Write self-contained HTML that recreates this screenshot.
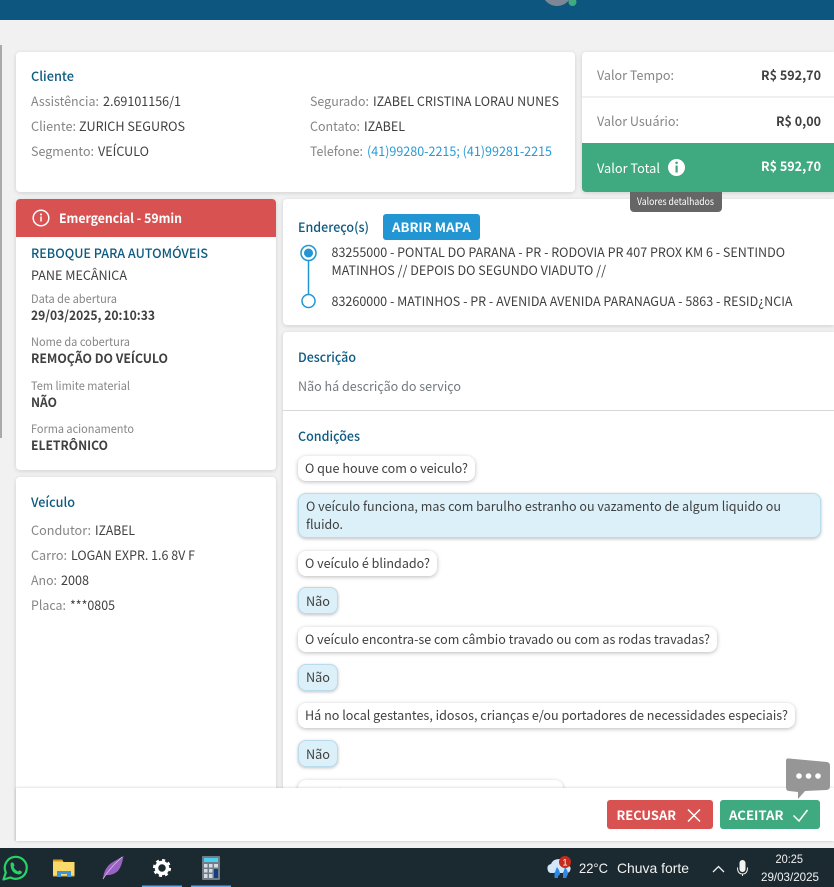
<!DOCTYPE html>
<html lang="pt-BR"><head><meta charset="utf-8"><title>Serviço</title>
<style>
html,body{margin:0;padding:0;width:834px;height:887px;overflow:hidden;background:#f1f1f1}
body{position:relative;font-family:"Liberation Sans","Noto Sans CJK JP",sans-serif}
.b{position:absolute;background:#fff;border-radius:4px;box-shadow:0 1px 4px rgba(0,0,0,.14)}
.q{position:absolute;background:#fff;border-radius:8px;box-shadow:0 1px 4px rgba(0,0,0,.28);left:298px}
.a{position:absolute;background:#dcf0f9;border:1px solid #b9dcec;box-sizing:border-box;border-radius:8px;box-shadow:0 1px 3px rgba(0,0,0,.25);left:298px}
svg{position:absolute;left:0;top:0}
text{font-family:"Noto Sans CJK JP","Liberation Sans",sans-serif;font-size:13px;fill:#404040}
.g{fill:#858585}.d{fill:#404040}.h{fill:#0d5a82;font-weight:500}.l{fill:#2b9ad6}.m{fill:#858585;font-size:11.5px}
.s{font-weight:700;fill:#404040}.w{fill:#fff}.wb{fill:#fff;font-weight:700}.n{fill:#727a80}
.tb{font-family:"Liberation Sans",sans-serif;fill:#f2f2f2;font-size:14px}
</style></head><body>
<div style="position:absolute;left:0;top:0;width:834px;height:20px;background:#0d5680"></div>
<div style="position:absolute;left:0;top:45px;width:2px;height:393px;background:#aaa"></div>

<div class="b" style="left:16px;top:52px;width:559px;height:140px"></div>
<div class="b" style="left:582px;top:52px;width:252px;height:140px;border-radius:4px 0 0 4px"></div>
<div style="position:absolute;left:582px;top:96px;width:252px;height:2px;background:#efefef"></div>
<div style="position:absolute;left:582px;top:143px;width:252px;height:49px;background:#3fa97f;border-radius:0 0 0 4px"></div>

<div class="b" style="left:16px;top:199px;width:260px;height:271px"></div>
<div style="position:absolute;left:16px;top:199px;width:260px;height:38px;background:#d95252;border-radius:4px 4px 0 0"></div>
<div class="b" style="left:16px;top:477px;width:260px;height:390px"></div>

<div class="b" style="left:283px;top:199px;width:551px;height:126px;border-radius:4px 0 0 4px"></div>
<div class="b" style="left:283px;top:332px;width:551px;height:520px;border-radius:4px 0 0 4px"></div>
<div style="position:absolute;left:283px;top:410px;width:551px;height:1px;background:#d8d8d8"></div>
<div style="position:absolute;left:383px;top:214px;width:97px;height:26px;background:#2196d3;border-radius:3px"></div>
<div style="position:absolute;left:630px;top:192px;width:92px;height:20px;background:#666;border-radius:0 0 4px 4px"></div>

<div class="q" style="top:456px;width:177px;height:25px"></div>
<div class="a" style="top:493px;width:523px;height:45px"></div>
<div class="q" style="top:551px;width:139px;height:25px"></div>
<div class="a" style="top:587px;width:40px;height:27px"></div>
<div class="q" style="top:627px;width:419px;height:25px"></div>
<div class="a" style="top:664px;width:40px;height:27px"></div>
<div class="q" style="top:703px;width:497px;height:25px"></div>
<div class="a" style="top:740px;width:40px;height:27px"></div>
<div class="q" style="top:780px;width:265px;height:25px"></div>

<svg width="834" height="887" viewBox="0 0 834 887" style="z-index:1">
<circle cx="557" cy="-9" r="15" fill="#7d8796"/><circle cx="572.500" cy="2" r="4" fill="#3fa97f"/>

<text class="h" x="31" y="81" textLength="43" lengthAdjust="spacingAndGlyphs">Cliente</text>
<text class="g" x="31" y="106" textLength="68" lengthAdjust="spacingAndGlyphs">Assistência:</text>
<text class="d" x="103" y="106" textLength="78" lengthAdjust="spacingAndGlyphs">2.69101156/1</text>
<text class="g" x="31" y="131" textLength="45" lengthAdjust="spacingAndGlyphs">Cliente:</text>
<text class="d" x="79" y="131" textLength="106" lengthAdjust="spacingAndGlyphs">ZURICH SEGUROS</text>
<text class="g" x="31" y="156" textLength="63" lengthAdjust="spacingAndGlyphs">Segmento:</text>
<text class="d" x="98" y="156" textLength="51" lengthAdjust="spacingAndGlyphs">VEÍCULO</text>
<text class="g" x="310" y="106" textLength="59" lengthAdjust="spacingAndGlyphs">Segurado:</text>
<text class="d" x="373" y="106" textLength="186" lengthAdjust="spacingAndGlyphs">IZABEL CRISTINA LORAU NUNES</text>
<text class="g" x="310" y="131" textLength="50" lengthAdjust="spacingAndGlyphs">Contato:</text>
<text class="d" x="364" y="131" textLength="41" lengthAdjust="spacingAndGlyphs">IZABEL</text>
<text class="g" x="310" y="156" textLength="53" lengthAdjust="spacingAndGlyphs">Telefone:</text>
<text class="l" x="367" y="156" textLength="185" lengthAdjust="spacingAndGlyphs">(41)99280-2215; (41)99281-2215</text>

<text class="g" x="597" y="80" textLength="77" lengthAdjust="spacingAndGlyphs">Valor Tempo:</text>
<text class="s" x="761" y="80" textLength="60" lengthAdjust="spacingAndGlyphs">R$ 592,70</text>
<text class="g" x="597" y="126" textLength="82" lengthAdjust="spacingAndGlyphs">Valor Usuário:</text>
<text class="s" x="776" y="126" textLength="45" lengthAdjust="spacingAndGlyphs">R$ 0,00</text>
<text class="w" x="597" y="173" textLength="63" lengthAdjust="spacingAndGlyphs">Valor Total</text>
<circle cx="676.500" cy="167.500" r="8.500" fill="#fff"/>
<rect x="675.500" y="165.500" width="2.200" height="7" fill="#3fa97f"/><circle cx="676.600" cy="162.800" r="1.300" fill="#3fa97f"/>
<text class="wb" x="761" y="171" textLength="60" lengthAdjust="spacingAndGlyphs">R$ 592,70</text>
<text class="w" x="637" y="205" style="font-size:10px" textLength="77" lengthAdjust="spacingAndGlyphs">Valores detalhados</text>

<circle cx="41" cy="218" r="7.800" fill="none" stroke="#fff" stroke-width="1.500"/>
<rect x="40.300" y="216.500" width="1.500" height="5" fill="#fff"/><circle cx="41" cy="214.500" r="1" fill="#fff"/>
<text class="wb" x="59" y="223" textLength="123" lengthAdjust="spacingAndGlyphs">Emergencial - 59min</text>
<text class="h" x="31" y="258" textLength="177" lengthAdjust="spacingAndGlyphs">REBOQUE PARA AUTOMÓVEIS</text>
<text class="d" x="31" y="280" textLength="96" lengthAdjust="spacingAndGlyphs">PANE MECÂNICA</text>
<text class="m" x="31" y="303" textLength="86" lengthAdjust="spacingAndGlyphs">Data de abertura</text>
<text class="s" x="31" y="320" textLength="124" lengthAdjust="spacingAndGlyphs">29/03/2025, 20:10:33</text>
<text class="m" x="31" y="346" textLength="99" lengthAdjust="spacingAndGlyphs">Nome da cobertura</text>
<text class="s" x="31" y="363" textLength="137" lengthAdjust="spacingAndGlyphs">REMOÇÃO DO VEÍCULO</text>
<text class="m" x="31" y="390" textLength="99" lengthAdjust="spacingAndGlyphs">Tem limite material</text>
<text class="s" x="31" y="407" textLength="26" lengthAdjust="spacingAndGlyphs">NÃO</text>
<text class="m" x="31" y="433" textLength="103" lengthAdjust="spacingAndGlyphs">Forma acionamento</text>
<text class="s" x="31" y="450" textLength="77" lengthAdjust="spacingAndGlyphs">ELETRÔNICO</text>

<text class="h" x="31" y="507" textLength="44" lengthAdjust="spacingAndGlyphs">Veículo</text>
<text class="g" x="31" y="535" textLength="60" lengthAdjust="spacingAndGlyphs">Condutor:</text>
<text class="d" x="95" y="535" textLength="40" lengthAdjust="spacingAndGlyphs">IZABEL</text>
<text class="g" x="31" y="560" textLength="36" lengthAdjust="spacingAndGlyphs">Carro:</text>
<text class="d" x="71" y="560" textLength="124" lengthAdjust="spacingAndGlyphs">LOGAN EXPR. 1.6 8V F</text>
<text class="g" x="31" y="585" textLength="26" lengthAdjust="spacingAndGlyphs">Ano:</text>
<text class="d" x="61" y="585" textLength="28" lengthAdjust="spacingAndGlyphs">2008</text>
<text class="g" x="31" y="610" textLength="35" lengthAdjust="spacingAndGlyphs">Placa:</text>
<text class="d" x="70" y="610" textLength="45" lengthAdjust="spacingAndGlyphs">***0805</text>

<text class="h" x="298" y="232" textLength="71" lengthAdjust="spacingAndGlyphs">Endereço(s)</text>
<text class="wb" x="392" y="232" textLength="79" lengthAdjust="spacingAndGlyphs">ABRIR MAPA</text>
<line x1="308.500" y1="253" x2="308.500" y2="296" stroke="#2196d3" stroke-width="1.500"/>
<circle cx="308.500" cy="253" r="7.500" fill="#fff" stroke="#2196d3" stroke-width="1.500"/>
<circle cx="308.500" cy="253" r="4.500" fill="#2196d3"/>
<circle cx="308.500" cy="301" r="6.500" fill="#fff" stroke="#2196d3" stroke-width="1.500"/>
<text class="d" x="331.500" y="257" textLength="453.500" lengthAdjust="spacingAndGlyphs">83255000 - PONTAL DO PARANA - PR - RODOVIA PR 407 PROX KM 6 - SENTINDO</text>
<text class="d" x="331.500" y="275" textLength="274.500" lengthAdjust="spacingAndGlyphs">MATINHOS // DEPOIS DO SEGUNDO VIADUTO //</text>
<text class="d" x="331.500" y="306" textLength="461" lengthAdjust="spacingAndGlyphs">83260000 - MATINHOS - PR - AVENIDA AVENIDA PARANAGUA - 5863 - RESID¿NCIA</text>

<text class="h" x="298" y="362" textLength="58" lengthAdjust="spacingAndGlyphs">Descrição</text>
<text class="n" x="298" y="391" textLength="163" lengthAdjust="spacingAndGlyphs">Não há descrição do serviço</text>
<text class="h" x="298" y="441" textLength="62" lengthAdjust="spacingAndGlyphs">Condições</text>

<text class="d" x="305" y="473" textLength="163" lengthAdjust="spacingAndGlyphs">O que houve com o veiculo?</text>
<text class="d" x="306" y="511" textLength="475" lengthAdjust="spacingAndGlyphs">O veículo funciona, mas com barulho estranho ou vazamento de algum liquido ou</text>
<text class="d" x="306" y="529" textLength="37" lengthAdjust="spacingAndGlyphs">fluido.</text>
<text class="d" x="305" y="568" textLength="125" lengthAdjust="spacingAndGlyphs">O veículo é blindado?</text>
<text class="d" x="306" y="606" textLength="24" lengthAdjust="spacingAndGlyphs">Não</text>
<text class="d" x="305" y="644" textLength="405" lengthAdjust="spacingAndGlyphs">O veículo encontra-se com câmbio travado ou com as rodas travadas?</text>
<text class="d" x="306" y="682" textLength="24" lengthAdjust="spacingAndGlyphs">Não</text>
<text class="d" x="305" y="720" textLength="483" lengthAdjust="spacingAndGlyphs">Há no local gestantes, idosos, crianças e/ou portadores de necessidades especiais?</text>
<text class="d" x="306" y="759" textLength="24" lengthAdjust="spacingAndGlyphs">Não</text>
<text class="d" x="305" y="799" textLength="251" lengthAdjust="spacingAndGlyphs">O veículo possui rodas de liga leve?</text>
</svg>

<div style="position:absolute;z-index:2;left:0;top:841px;width:834px;height:7px;background:#f1f1f1"></div>
<div style="position:absolute;z-index:2;left:16px;top:788px;width:818px;height:53px;background:#fff;box-shadow:0 0 3px rgba(0,0,0,.2)"></div>
<div style="position:absolute;z-index:2;left:607px;top:800px;width:106px;height:29px;background:#d95252;border-radius:3px"></div>
<div style="position:absolute;z-index:2;left:720px;top:800px;width:100px;height:29px;background:#3fa97f;border-radius:3px"></div>
<div style="position:absolute;z-index:2;left:0;top:848px;width:834px;height:39px;background:#1b2a30"></div>

<svg width="834" height="887" viewBox="0 0 834 887" style="z-index:3">
<text class="wb" x="616.500" y="820" textLength="59.500" lengthAdjust="spacingAndGlyphs">RECUSAR</text>
<path d="M688 809.500L700 821.500M700 809.500L688 821.500" stroke="#fff" stroke-width="1.500" fill="none"/>
<text class="wb" x="729" y="820" textLength="54.500" lengthAdjust="spacingAndGlyphs">ACEITAR</text>
<path d="M793.500 815.500L799 821L807.500 810" stroke="#fff" stroke-width="1.500" fill="none"/>

<path d="M789 758.500L827 762Q830 762.500 830 766L830 786Q830 790 826 790L805 791L798 799L798 792L789 791Q786 791 786 787L786 761Q786 758 789 758.500Z" fill="#969696"/>
<circle cx="799" cy="776" r="2.800" fill="#fff"/><circle cx="808.500" cy="776" r="2.800" fill="#fff"/><circle cx="818" cy="776" r="2.800" fill="#fff"/>

<path d="M3.500 879.500L5.800 872.500A11 11 0 1 1 10.500 877.500Z" fill="none" stroke="#25d366" stroke-width="2.200" stroke-linejoin="round"/>
<path d="M10.500 863.500Q12 861.500 13.500 863L14.500 865.500L13.500 867Q15 870 18 871.500L19.500 870.300L22 871.800Q22 874 19 874.500Q10.500 873.500 10.500 863.500Z" fill="#25d366"/>

<path d="M53 859.500H62L63.500 862H74.500V876.500H53Z" fill="#fbd96b"/>
<path d="M53 859.500H62L63 861.500H53Z" fill="#d99a16"/>
<path d="M53 875.500H74.500V876.500H53Z" fill="#d9a53a"/>
<path d="M57 877V871H71V877H67V874H61V877Z" fill="#3a94dc"/>

<path d="M103 879Q104 867 113 862Q118 859 123.500 856Q122 866 118 871Q112 876 105.500 875Q104 877 103 879Z" fill="#9a62c2"/>
<path d="M103 879Q109 869 122 857" stroke="#d9c0ea" stroke-width=".8" fill="none"/>

<circle cx="162" cy="868" r="5.500" fill="none" stroke="#fff" stroke-width="3.500"/>
<circle cx="162" cy="868" r="7.800" fill="none" stroke="#fff" stroke-width="2.500" stroke-dasharray="3 3.100"/>
<rect x="142" y="885.500" width="40" height="1.500" fill="#62a9e8"/>

<rect x="202" y="856" width="18" height="24" rx="1" fill="#6e7d88"/>
<rect x="204" y="858" width="14" height="4" fill="#4dd0f0"/>
<g fill="#d5dbe0"><rect x="204" y="864" width="3.500" height="3.500"/><rect x="209" y="864" width="3.500" height="3.500"/><rect x="214" y="864" width="4" height="3.500"/><rect x="204" y="869" width="3.500" height="3.500"/><rect x="209" y="869" width="3.500" height="3.500"/><rect x="204" y="874" width="3.500" height="4"/><rect x="209" y="874" width="3.500" height="4"/></g>
<rect x="214" y="869" width="4" height="9" fill="#143f7c"/>
<rect x="191" y="885.500" width="40" height="1.500" fill="#62a9e8"/>

<path d="M548 871Q546 865 551 864Q553 859 559 859Q567 859 568 865Q572 867 570 871Q569 873 566 873H551Q549 873 548 871Z" fill="#d4e6f8"/>
<path d="M557 867Q560 871 560 874Q559 876 557.500 876Q555 876 555 873.500Q555 871 557 867ZM554.500 872H558V878H554.500ZM563 872H566.500V878H563ZM565 867Q568 871 568 874Q567 877 565 877Q562.500 876 563 873.500Z" fill="#2b88e6"/>
<circle cx="565" cy="862" r="6" fill="#c42b1c"/>
<text x="565" y="865.500" text-anchor="middle" style="font-family:'Liberation Sans',sans-serif;font-size:9px;fill:#fff">1</text>
<text class="tb" x="579" y="873" textLength="29" lengthAdjust="spacingAndGlyphs">22°C</text>
<text class="tb" x="617" y="873" textLength="72" lengthAdjust="spacingAndGlyphs">Chuva forte</text>
<path d="M713 872L718.500 866.500L724 872" stroke="#f2f2f2" stroke-width="1.300" fill="none"/>
<rect x="739.500" y="860" width="6" height="12" rx="3" fill="#f2f2f2"/>
<path d="M737.500 867.500Q737.500 874 742.500 874Q747.500 874 747.500 867.500M742.500 874V876" stroke="#f2f2f2" stroke-width="1" fill="none"/>
<text class="tb" x="775.500" y="863" style="font-size:12px" textLength="27.500" lengthAdjust="spacingAndGlyphs">20:25</text>
<text class="tb" x="761" y="881" style="font-size:12px" textLength="58" lengthAdjust="spacingAndGlyphs">29/03/2025</text>
</svg>
</body></html>
